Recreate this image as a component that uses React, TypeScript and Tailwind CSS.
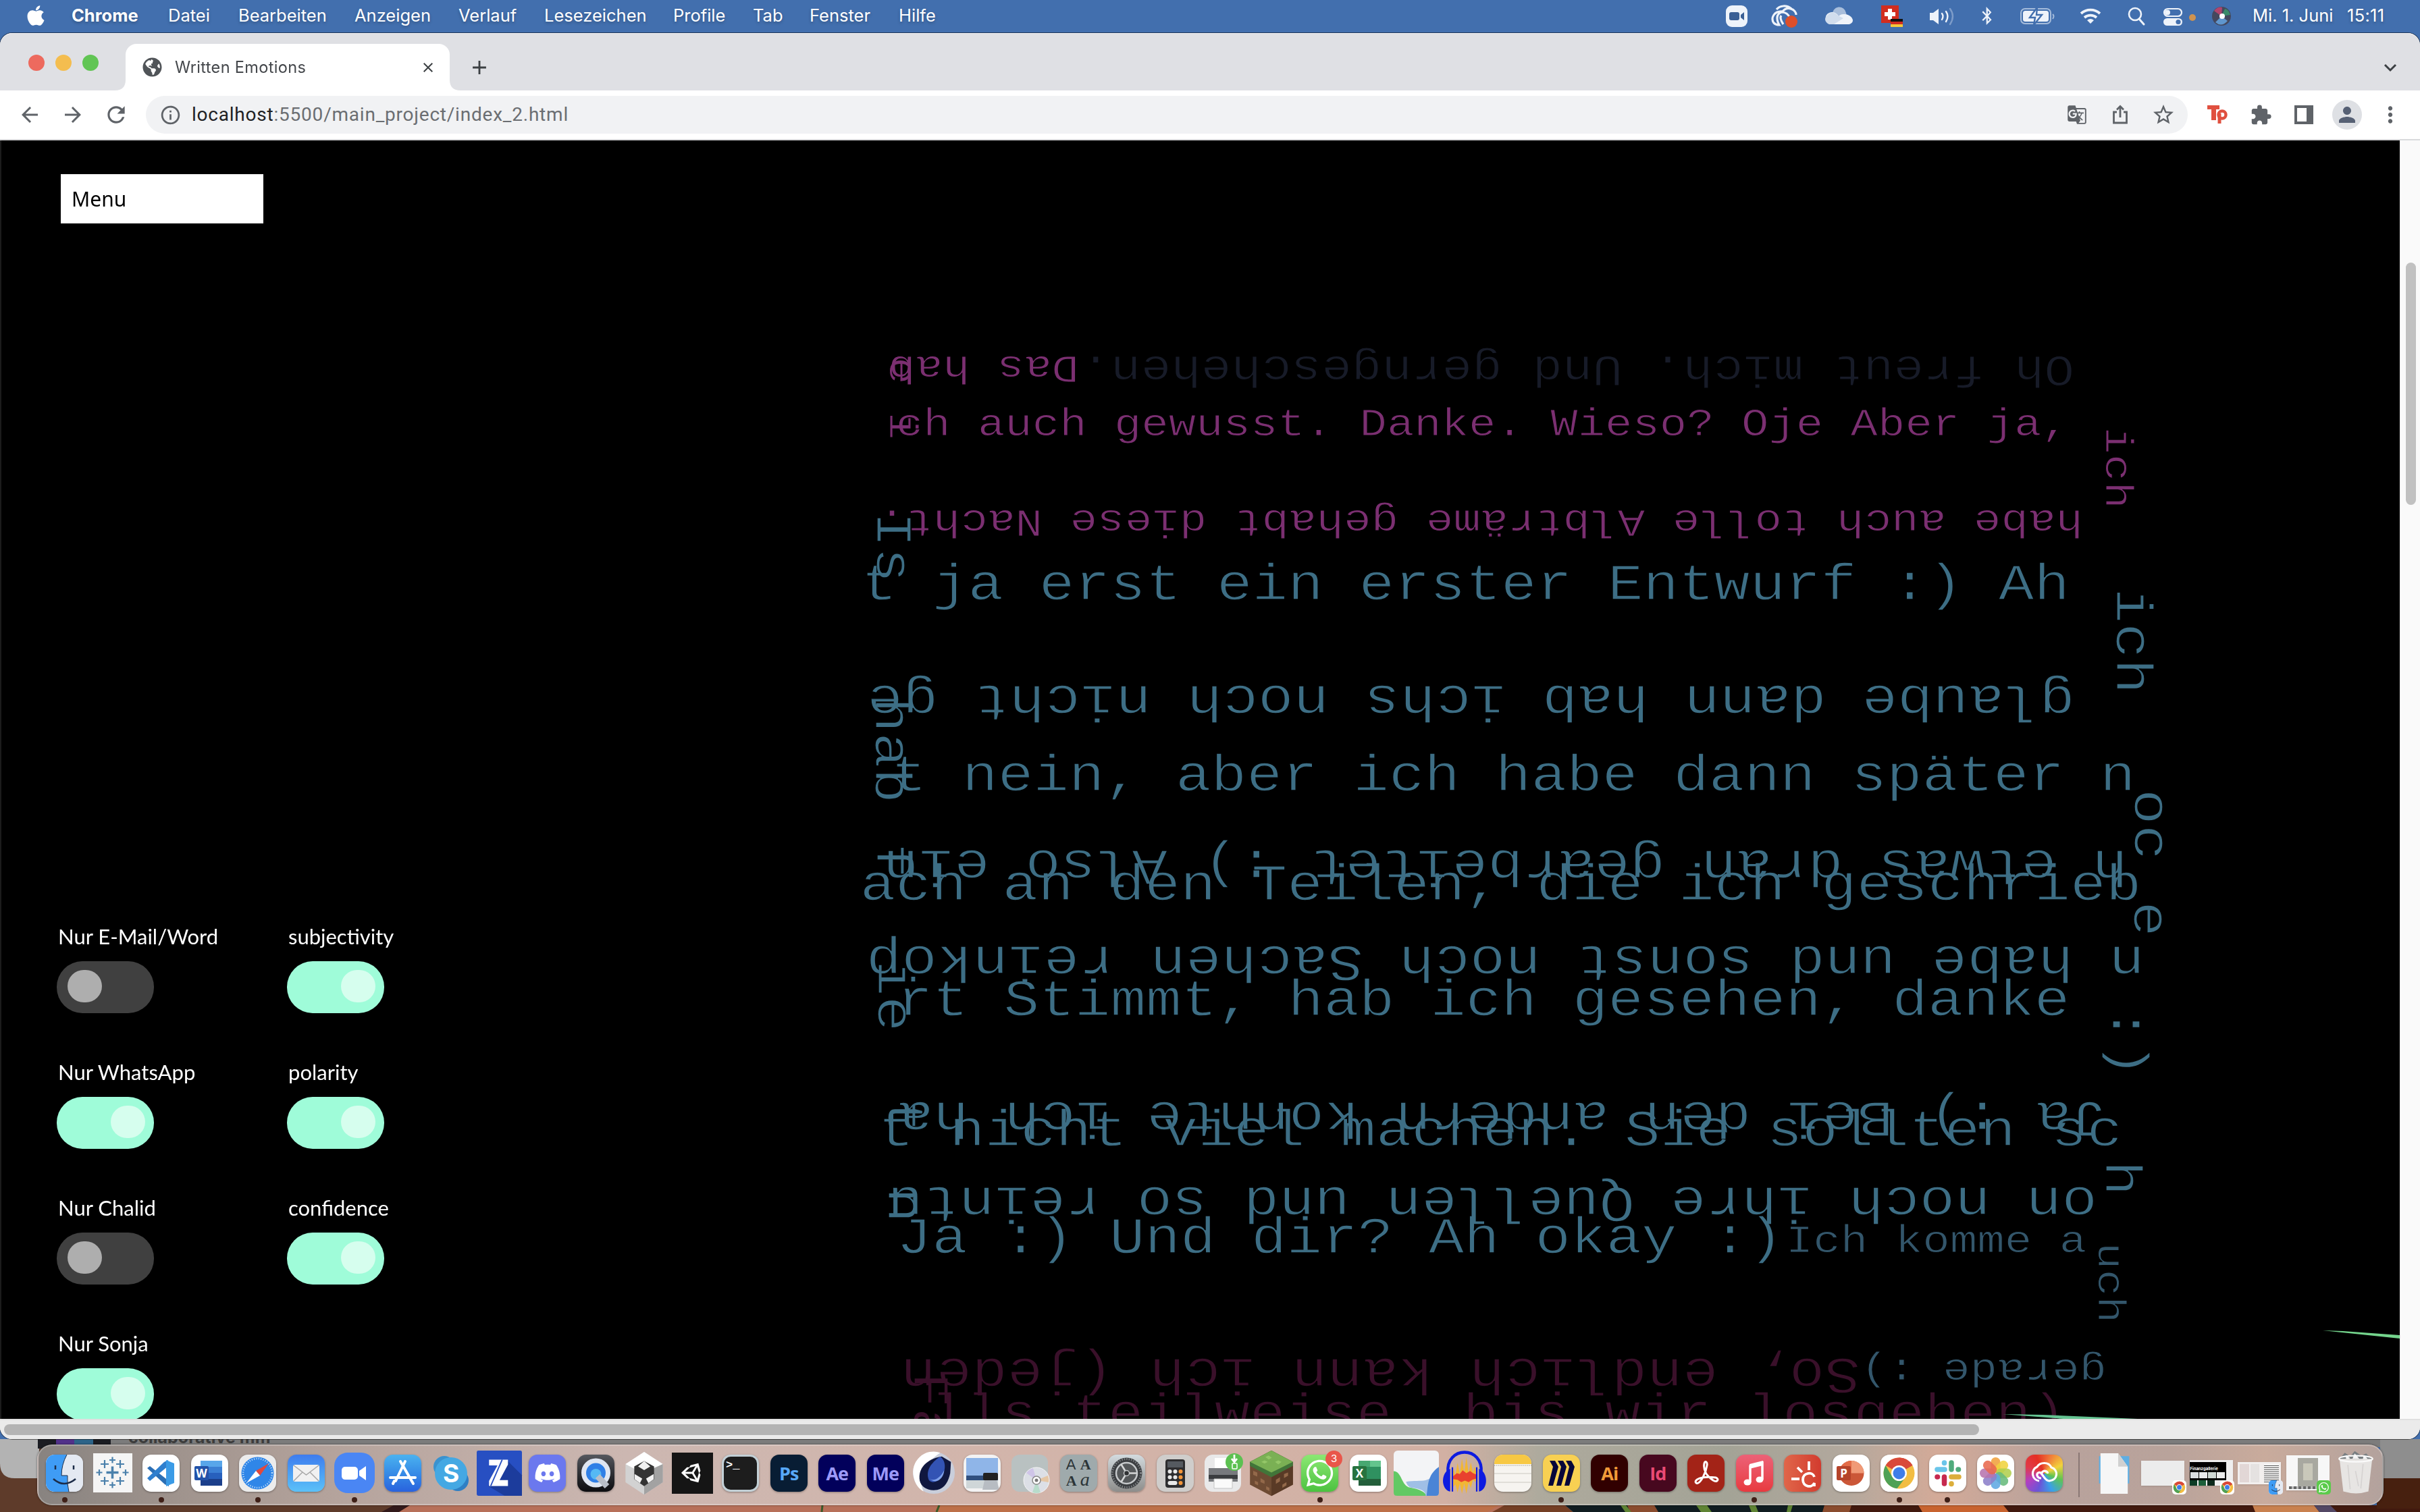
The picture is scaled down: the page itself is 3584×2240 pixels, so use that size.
import React from "react";
import { FaApple, FaBluetoothB, FaDiscord, FaGlobeAmericas, FaUnity, FaWhatsapp } from "react-icons/fa";
import {
  MdAdd,
  MdArrowBack,
  MdArrowForward,
  MdClose,
  MdExtension,
  MdGTranslate,
  MdInfoOutline,
  MdMoreVert,
  MdPerson,
  MdRefresh,
  MdStarBorder,
} from "react-icons/md";

/* ---------- poem canvas ---------- */

const PURPLE = "#7b2f71";
const TEAL = "#3d6e85";
const SLATE = "#33566b";
const MAROON = "#3a102a";
const NIGHT = "#171b28";

type Dir = "right" | "flip" | "down";
// text, reading direction, centre of the first letter, baseline, advance, colour
type Line = [string, Dir, number, number, number, string];

const LINES: Line[] = [
  ["Oh freut mich. Und gerngeschehen.", "flip", 3050, 528, 44.6, NIGHT],
  ["Das hab", "flip", 1578, 528, 40.4, PURPLE],
  ["e i", "down", 550, 1318, 40.8, PURPLE],
  ["ch auch gewusst. Danke. Wieso? Oje Aber ja,", "right", 1347, 646, 40.4, PURPLE],
  ["ich", "down", 653, 3118, 40.4, PURPLE],
  ["habe auch tolle Albträme gehabt diese Nacht.", "flip", 3065, 755, 40.56, PURPLE],
  ["Is", "down", 784, 1299, 52.6, TEAL],
  ["t ja erst ein erster Entwurf :) Ah", "right", 1302, 888, 52.64, TEAL],
  ["ich", "down", 897, 3135, 52.4, TEAL],
  ["glaube dann hab ichs noch nicht ge", "flip", 3047, 1016, 52.62, TEAL],
  ["hab", "down", 1059, 1297, 52.4, TEAL],
  ["t nein, aber ich habe dann später n", "right", 1346, 1171, 52.66, TEAL],
  ["oc", "down", 1195, 3161, 53, TEAL],
  ["h etwas dran gearbeitet :) Also ein", "flip", 3125, 1259, 52.68, TEAL],
  ["f", "down", 1275, 1299, 52.6, TEAL],
  ["ach an den Teilen, die ich geschrieb", "right", 1300, 1333, 52.72, TEAL],
  ["e", "down", 1361, 3161, 52.6, TEAL],
  ["n habe und sonst noch Sachen reinkop", "flip", 3150, 1402, 52.6, TEAL],
  ["ie", "down", 1449, 1300, 53, TEAL],
  ["rt Stimmt, hab ich gesehen, danke", "right", 1355, 1504, 52.64, TEAL],
  [":)", "down", 1517, 3129, 52.6, TEAL],
  ["Ja :) Bei den andern konnte ich ha", "flip", 3094, 1632, 52.68, TEAL],
  ["t", "down", 1653, 1316, 52.6, TEAL],
  ["t nicht viel machen. Sie sollten sc", "right", 1327, 1697, 52.65, TEAL],
  ["h", "down", 1745, 3119, 52.6, TEAL],
  ["on noch ihre Quellen und so reintu", "flip", 3080, 1758, 52.7, TEAL],
  ["n", "down", 1785, 1316, 52.6, TEAL],
  ["Ja :) Und dir? Ah okay :)", "right", 1354, 1856, 52.55, TEAL],
  ["Ich komme a", "right", 2665, 1856, 40.5, SLATE],
  ["uch", "down", 1861, 3107, 39.8, SLATE],
  ["gerade :)", "flip", 3100, 2014, 40.5, SLATE],
  ["So, endlich kann ich (jeden", "flip", 2729, 2013, 52.65, MAROON],
  ["Fa", "down", 2059, 1354, 52.6, MAROON],
  ["lls teilweise, bis wir losgehen)", "right", 1404, 2117, 52.6, MAROON],
];

const CANVAS_TOP = 208;

function PoemLine({ line }: { line: Line }) {
  const [text, dir, start, base, adv, color] = line;
  const size = adv / 0.6001;
  const half = adv / 2;
  const x = dir === "down" ? base : dir === "flip" ? start + half : start - half;
  const y = (dir === "down" ? start - half : base) - CANVAS_TOP;
  const angle = dir === "down" ? 90 : dir === "flip" ? 180 : 0;
  return (
    <span
      className="absolute block whitespace-pre leading-none [-webkit-text-stroke:0.018em_black] font-['Liberation_Mono',monospace]"
      style={{
        left: x,
        top: y - size * 0.7666,
        fontSize: size,
        color,
        transform: `rotate(${angle}deg) scaleY(0.86)`,
        transformOrigin: "0 0.7666em",
      }}
    >
      {text}
    </span>
  );
}

/* ---------- toggles ---------- */

function Toggle({ label, on }: { label: string; on: boolean }) {
  return (
    <div className="h-[201px] w-[341px]">
      <div className="h-[57px] pl-[2px] text-[31px] leading-[40px] text-white font-['Lato',sans-serif]">
        {label}
      </div>
      <div
        className={
          on
            ? "flex h-[77px] w-[144px] justify-end rounded-[38px] bg-[#9ffcd9] pt-[13px] pr-[13px]"
            : "flex h-[77px] w-[144px] rounded-[38px] bg-[#404040] pt-[13px] pl-[16px]"
        }
      >
        <div className={on ? "h-[48px] w-[51px] rounded-full bg-[#d6feee]" : "h-[48px] w-[51px] rounded-full bg-[#aeaeae]"} />
      </div>
    </div>
  );
}

/* ---------- menu bar ---------- */

function MenuBar() {
  return (
    <div className="flex h-[49px] items-center bg-[#426fae] text-[25.5px] leading-none text-white font-['Inter',sans-serif] [text-shadow:0_2px_4px_rgba(0,0,0,0.25)]">
      <div className="w-[106px] pb-[3px] pl-[36px]">
        <FaApple className="size-[34px]" />
      </div>
      <div className="flex pb-[3px]">
        <div className="w-[143px] font-bold">Chrome</div>
        <div className="w-[104px]">Datei</div>
        <div className="w-[172px]">Bearbeiten</div>
        <div className="w-[154px]">Anzeigen</div>
        <div className="w-[127px]">Verlauf</div>
        <div className="w-[191px]">Lesezeichen</div>
        <div className="w-[118px]">Profile</div>
        <div className="w-[84px]">Tab</div>
        <div className="w-[132px]">Fenster</div>
        <div>Hilfe</div>
      </div>
      <svg className="ml-auto h-[49px] w-[780px]" viewBox="2540 0 780 49" fill="none">
        <rect x="2556" y="8" width="32" height="32" rx="9" fill="#eef3fa" />
        <rect x="2561" y="18" width="15" height="12" rx="3" fill="#3a5f95" />
        <path d="M2578 22l5-4v12l-5-4z" fill="#3a5f95" />
        <g stroke="#eef3fa" strokeWidth="3.2">
          <path d="M2660 22c0-8-13-14-20-5-13-1-18 10-13 17 2 2 4 3 8 3-5-9-4-17 4-19 7 0 10 4 12 9" />
          <path d="M2631 14c5-6 15-7 22-1M2638 23c-3 4 1 10 3 13" />
        </g>
        <circle cx="2653" cy="32" r="9" fill="#dd4f2a" />
        <path d="M2714 22a10 10 0 0 1 20-3l1 5-14 8z" fill="#a9bedb" />
        <path d="M2711 36a9 9 0 0 1-2-17c6-3 12 1 14 5 2-2 4-3 7-3 8-1 14 5 14 9 0 4-4 6-7 6z" fill="#f0f4fa" />
        <path d="M2707 22c4-5 11-4 15 1l8 4-14 9h-7c-7-3-8-10-2-14z" fill="#d1dded" />
        <rect x="2786" y="8" width="26" height="26" fill="#d12d1f" />
        <path d="M2799 13v16M2791 21h16" stroke="#fff" strokeWidth="6" />
        <path fill="#111" d="M2800 28h18v4h-18z" />
        <path fill="#d12d1f" d="M2800 32h18v4h-18z" />
        <path fill="#f3c93c" d="M2800 36h18v4h-18z" />
        <path d="M2858 19h5l8-6v23l-8-6h-5z" fill="#eef3fa" />
        <path d="M2876 20q3 4 0 9M2882 17q5 7 0 15" stroke="#eef3fa" strokeWidth="2.4" strokeLinecap="round" />
        <path d="M2888 13q8 11 0 23" stroke="#7d9cc9" strokeWidth="2.4" strokeLinecap="round" />
        <rect x="2993" y="13" width="44" height="22" rx="6" stroke="#a5bcdb" strokeWidth="2" />
        <rect x="2996" y="16" width="38" height="16" rx="3.5" fill="#eef3fa" />
        <path d="M3040 21q3 3 0 7" stroke="#a5bcdb" strokeWidth="2" />
        <path d="M3017 11l-11 15h8l-2 11 12-15h-8z" fill="#eef3fa" stroke="#426fae" strokeWidth="2.4" />
        <path d="M3082 20a21 21 0 0 1 28 0M3087 26a14 14 0 0 1 18 0" stroke="#eef3fa" strokeWidth="3.8" />
        <path d="M3091 30q5-4 10 0l-5 5z" fill="#eef3fa" />
        <circle cx="3162" cy="21" r="9" stroke="#eef3fa" strokeWidth="2.6" />
        <path d="M3168 28l7 8" stroke="#eef3fa" strokeWidth="3" strokeLinecap="round" />
        <rect x="3205" y="13" width="26" height="11" rx="5.5" stroke="#eef3fa" strokeWidth="2.2" />
        <circle cx="3210" cy="18.500" r="4" fill="#eef3fa" />
        <rect x="3204" y="27" width="28" height="11" rx="5.500" fill="#eef3fa" />
        <circle cx="3226" cy="32.500" r="3.600" fill="#426fae" />
        <circle cx="3247" cy="26" r="5" fill="#cf934f" />
        <circle cx="3290" cy="24" r="14" fill="#44485e" />
        <path d="M3279 16q6-7 12-5l-1 13z" fill="#b0456e" />
        <path d="M3303 22q-2-8-8-9l-5 11z" fill="#3a8a6a" />
        <path d="M3281 33q9 8 18-2l-9-7z" fill="#5f96ce" />
        <circle cx="3291" cy="24" r="4" fill="#fff" />
      </svg>
      <FaBluetoothB className="absolute top-[10px] left-[2929px] size-[27px] text-[#eef3fa]" />
      <div className="flex w-[264px] pb-[3px] pl-[16px] whitespace-pre">
        <span className="w-[140px]">Mi. 1. Juni</span>
        <span className="tracking-[0.3px]">15:11</span>
      </div>
    </div>
  );
}

/* ---------- browser chrome ---------- */

function TabStrip() {
  return (
    <div className="flex h-[85px] rounded-t-[18px] border-t border-[#f3f3f5] bg-[#dfe0e4] pt-[15px]">
      <div className="flex w-[186px] gap-[16px] pt-[16px] pl-[42px]">
        <div className="size-[24px] rounded-full bg-[#ed6a5e]" />
        <div className="size-[24px] rounded-full bg-[#f4bd4f]" />
        <div className="size-[24px] rounded-full bg-[#61c554]" />
      </div>
      <div className="relative flex h-[69px] w-[480px] items-center rounded-t-[16px] bg-white pl-[25px]">
        <svg className="absolute bottom-0 -left-[16px] size-[16px]" viewBox="0 0 16 16">
          <path d="M16 0v16H0Q16 16 16 0z" fill="#fff" />
        </svg>
        <svg className="absolute -right-[16px] bottom-0 size-[16px]" viewBox="0 0 16 16">
          <path d="M0 0v16h16Q0 16 0 0z" fill="#fff" />
        </svg>
        <FaGlobeAmericas className="size-[29px] text-[#505458]" />
        <span className="ml-[19px] w-[362px] text-[24px] leading-none tracking-[0.35px] text-[#45484c] font-['Inter',sans-serif]">
          <span className="inline-block origin-left scale-x-[0.98]">Written Emotions</span>
        </span>
        <MdClose className="ml-[1px] size-[24px] text-[#3c4043]" />
      </div>
      <MdAdd className="mt-[18px] ml-[27px] size-[34px] text-[#3c4043]" />
      <svg className="mt-[25px] mr-[34px] ml-auto size-[20px]" viewBox="0 0 20 20" fill="none">
        <path d="M2 6l8 8 8-8" stroke="#3c4043" strokeWidth="3" />
      </svg>
    </div>
  );
}

function Toolbar() {
  return (
    <div className="flex h-[74px] items-center border-b-2 border-[#d9dadc] bg-white text-[#5f6368]">
      <MdArrowBack className="ml-[26px] size-[36px]" />
      <MdArrowForward className="ml-[28px] size-[36px]" />
      <MdRefresh className="ml-[27px] size-[38px]" />
      <div className="ml-[25px] flex h-[56px] w-[3024px] items-center rounded-full bg-[#f1f2f4]">
        <MdInfoOutline className="ml-[20px] size-[33px]" />
        <span className="ml-[15px] text-[28px] leading-none tracking-[0.78px] text-[#6b6e72] font-['Roboto',sans-serif]">
          <span className="text-[#202124]">localhost</span>:5500/main_project/index_2.html
        </span>
        <MdGTranslate className="ml-auto size-[30px]" />
        <svg className="ml-[34px] size-[30px]" viewBox="0 0 30 30" fill="none" stroke="#5f6368" strokeWidth="2.800">
          <path d="M10 11H5.500v16h19V11H20M15 19V3M10 7.500l5-5 5 5" />
        </svg>
        <MdStarBorder className="mr-[18px] ml-[31px] size-[36px]" />
      </div>
      <svg className="ml-[28px] size-[32px]" viewBox="0 0 32 32">
        <path d="M1 2h18v6h-5v16H7V8H1z" fill="#e0503f" />
        <path d="M19 29V14" stroke="#e0503f" strokeWidth="5" />
        <circle cx="23" cy="16" r="5.500" fill="none" stroke="#e0503f" strokeWidth="4.500" />
      </svg>
      <MdExtension className="ml-[32px] size-[33px]" />
      <svg className="ml-[33px] size-[28px]" viewBox="0 0 28 28">
        <path d="M0 0h28v28H0zM4 4v20h14V4z" fill="#5f6368" fillRule="evenodd" />
      </svg>
      <div className="ml-[28px] flex size-[44px] items-center justify-center rounded-full bg-[#dee0e4]">
        <MdPerson className="size-[36px] text-[#566074]" />
      </div>
      <MdMoreVert className="ml-[23px] size-[38px]" />
    </div>
  );
}

/* ---------- dock icons ---------- */

function Tile({ className, children }: { className: string; children?: React.ReactNode }) {
  return (
    <div className={"flex size-[55px] items-center justify-center overflow-hidden rounded-[13px] leading-none shadow-[0_1px_3px_rgba(0,0,0,0.35)] " + className}>
      {children}
    </div>
  );
}

function Pic({ children, w = 55, h = 55 }: { children: React.ReactNode; w?: number; h?: number }) {
  return (
    <svg width={w} height={h} viewBox="0 0 55 55" className="max-w-none shrink-0 overflow-visible" fill="none">
      {children}
    </svg>
  );
}

function ChromeMark() {
  return (
    <>
      <circle cx="27.500" cy="27.500" r="23" fill="#f2bd42" />
      <path d="M27.500 27.500L7.600 16A23 23 0 0 1 47.400 16z" fill="#d9493a" />
      <path d="M27.500 4.500A23 23 0 0 1 47.400 16H27.500z" fill="#d9493a" />
      <path d="M7.600 16a23 23 0 0 0 17 34.300L37.500 33l-20 0z" fill="#4fa155" />
      <circle cx="27.500" cy="27.500" r="11.500" fill="#fff" />
      <circle cx="27.500" cy="27.500" r="9" fill="#3f7de8" />
    </>
  );
}

function FinderMark() {
  return (
    <>
      <path d="M0 0h55v55H0z" fill="#e4e9f2" />
      <path d="M0 0h31q-8 15-8 31h9q-1 12 2 24H0z" fill="#3f9cf5" />
      <path d="M14 16v6M41 16v6" stroke="#1c2c48" strokeWidth="2.500" />
      <path d="M11 36q16 14 33 0" stroke="#1c2c48" strokeWidth="2.500" />
      <path d="M31 0q-8 15-8 31h9q-1 12 2 24" stroke="#1c2c48" strokeWidth="1" />
    </>
  );
}

const TABLEAU_MARKS: [number, number, number][] = [
  [27.5, 27.5, 9],
  [16, 15, 6],
  [39, 15, 6],
  [16, 40, 6],
  [39, 40, 6],
  [27.5, 9, 4.5],
  [27.5, 46, 4.5],
  [8, 27.5, 4.5],
  [47, 27.5, 4.5],
];

const PETALS: [number, string][] = [
  [0, "#f0a03c"],
  [45, "#f0d33e"],
  [90, "#b2cf4e"],
  [135, "#68bb7c"],
  [180, "#5fa9e2"],
  [225, "#8c7fc9"],
  [270, "#b774ae"],
  [315, "#e8694e"],
];

type App = { dot?: boolean; icon: React.ReactNode };

const adobe = "text-[27px] font-bold font-['Open_Sans',sans-serif] tracking-[-1px]";

const APPS: App[] = [
  { dot: true, icon: <Tile className="bg-[#e4e9f2]"><Pic><FinderMark /></Pic></Tile> },
  {
    icon: (
      <div className="size-[58px] bg-[#f5f5f5] p-[1px]">
        <Pic>
          {TABLEAU_MARKS.map(([x, y, r], i) => (
            <path key={i} d={`M${x - r} ${y}h${2 * r}M${x} ${y - r}v${2 * r}`} stroke="#4a80ab" strokeWidth={r > 8 ? 3.5 : 2.2} />
          ))}
        </Pic>
      </div>
    ),
  },
  {
    dot: true,
    icon: (
      <Tile className="bg-white">
        <Pic>
          <path d="M7 20l4-3 28 22v8L33 44z" fill="#2b6fb5" />
          <path d="M7 35l4 4 27-22V8l-6 3z" fill="#2f7fce" />
          <path d="M35 8l12 5v29l-12 5z" fill="#3b9be6" />
        </Pic>
      </Tile>
    ),
  },
  {
    icon: (
      <Tile className="bg-white">
        <Pic>
          <path d="M14 9h32v9H14z" fill="#58a6ea" />
          <path d="M14 18h32v9H14z" fill="#3b7fd4" />
          <path d="M14 27h32v9H14z" fill="#2760bd" />
          <path d="M14 36h32v10H14z" fill="#1b3f8b" />
          <rect x="5" y="17" width="21" height="21" rx="2" fill="#2252a8" />
          <text x="15.500" y="33.500" textAnchor="middle" fontSize="17" fontWeight="700" fill="#fff" fontFamily="Open Sans, sans-serif">W</text>
        </Pic>
      </Tile>
    ),
  },
  {
    dot: true,
    icon: (
      <Tile className="bg-[#ececec]">
        <Pic>
          <circle cx="27.500" cy="27.500" r="24" fill="#2f86e8" />
          <circle cx="27.500" cy="27.500" r="21.500" stroke="#d4e8fb" strokeWidth="2.500" strokeDasharray="1 2.400" />
          <path d="M44 13L25 24l6 7z" fill="#e2483c" />
          <path d="M11 42l14-18 6 7z" fill="#fff" />
        </Pic>
      </Tile>
    ),
  },
  {
    icon: (
      <Tile className="bg-gradient-to-b from-[#3f7cee] to-[#5cc1f8]">
        <Pic>
          <rect x="8" y="15" width="39" height="25" rx="3" fill="#f1f1f1" />
          <path d="M9 16l18.500 14L46 16M9 39l13-13M46 39L33 26" stroke="#a8a8a8" strokeWidth="1.500" />
        </Pic>
      </Tile>
    ),
  },
  {
    dot: true,
    icon: (
      <div className="flex size-[60px] items-center justify-center rounded-[20px] bg-[#4a86f4]">
        <Pic>
          <rect x="9" y="18" width="24" height="19" rx="5" fill="#fff" />
          <path d="M35 24l10-7v21l-10-7z" fill="#fff" />
        </Pic>
      </div>
    ),
  },
  {
    icon: (
      <Tile className="bg-gradient-to-b from-[#4bb2ef] to-[#2a62dd]">
        <Pic>
          <path d="M31 10L17 39M24 10l19 33M9 34h37M15 39l-2 4" stroke="#fff" strokeWidth="4" strokeLinecap="round" />
        </Pic>
      </Tile>
    ),
  },
  {
    icon: (
      <Pic>
        <circle cx="18" cy="18" r="16" fill="#3a92cf" />
        <circle cx="38" cy="38" r="16" fill="#2f7fc4" />
        <circle cx="28" cy="28" r="24" fill="#44a8e3" />
        <text x="28" y="41" textAnchor="middle" fontSize="37" fontWeight="700" fill="#fff" fontFamily="Inter, sans-serif">S</text>
      </Pic>
    ),
  },
  {
    icon: (
      <Pic w={67} h={67}>
        <rect width="55" height="55" rx="2" fill="#274fc2" />
        <path d="M37 12l18 18v25H34L14 43z" fill="#1c3c9c" />
        <path d="M15 11h23v6L24 43h-9v-6l14-26zM15 11h14v7H15zM24 36h14v7H24z" fill="#fff" />
        <path d="M31 11L17 43" stroke="#274fc2" strokeWidth="1.500" />
      </Pic>
    ),
  },
  { icon: <Tile className="bg-[#6b78ee]"><FaDiscord className="size-[40px] text-white" /></Tile> },
  {
    icon: (
      <Tile className="bg-gradient-to-b from-[#55585e] to-[#0d0d10]">
        <Pic>
          <circle cx="27.500" cy="27" r="18" fill="#2f7fe6" stroke="#dfe6f2" strokeWidth="7" />
          <circle cx="27.500" cy="29" r="8" fill="#55b9f4" />
          <path d="M30 32l14 15" stroke="#b9bec8" strokeWidth="9" />
        </Pic>
      </Tile>
    ),
  },
  {
    icon: (
      <Pic w={62} h={62}>
        <path d="M27.500 0L52 16v24L27.500 56 3 40V16z" fill="#d2d2d2" />
        <path d="M27.500 0L52 16 27.500 29 3 16z" fill="#fff" />
        <path d="M27.500 27L52 16v24L27.500 56z" fill="#a2a2a2" />
        <path d="M27.500 12l13 7v17l-13 9-13-9V19z" fill="#343434" />
        <path d="M27.500 12l8 7-8 5-8-5zM15 29l10 6-3 6-7-5zM40 29l-10 6 3 6 7-5z" fill="#f1f1f1" />
      </Pic>
    ),
  },
  { icon: <div className="flex size-[61px] items-center justify-center bg-[#151515]"><FaUnity className="size-[34px] text-white" /></div> },
  {
    icon: (
      <Tile className="border-[3px] border-[#c3d0d6] bg-[#1d1d1d]">
        <Pic>
          <text x="6" y="20" fontSize="17" fontWeight="700" fill="#fff" fontFamily="Liberation Mono, monospace">&gt;_</text>
        </Pic>
      </Tile>
    ),
  },
  { icon: <Tile className={"bg-[#081d34] text-[#57a8f8] " + adobe}>Ps</Tile> },
  { icon: <Tile className={"bg-[#02005b] text-[#9c9af8] " + adobe}>Ae</Tile> },
  { icon: <Tile className={"bg-[#02005b] text-[#9c9af8] " + adobe}>Me</Tile> },
  {
    icon: (
      <Pic w={62} h={62}>
        <circle cx="27.500" cy="27.500" r="27.500" fill="#c9cedb" />
        <path d="M36 1A27 27 0 0 0 1 33c2 9 6 15 13 19C6 35 14 15 36 1z" fill="#fff" />
        <path d="M38 6C18 9 6 22 9 38c2 9 12 14 23 12 10-2 15-12 17-22l1-15z" fill="#10173f" />
        <path d="M36 6c-12 8-20 19-15 31 6 7 17-1 20-11 2-8 1-15-5-20z" fill="#3353b4" />
        <path d="M22 35c6 5 15-2 19-11 0 10-10 20-19 11z" fill="#7fa0ea" />
      </Pic>
    ),
  },
  {
    icon: (
      <Tile className="bg-[#f3f3f3]">
        <Pic>
          <path d="M4 5h47v30H4z" fill="#8fb5e8" />
          <path d="M4 31h47v7H4z" fill="#31507f" />
          <path d="M4 38h47v12H4z" fill="#cfd6d8" />
          <path d="M31 28h18v10l4 14H28l3-14z" fill="#b7bcc2" />
          <rect x="29" y="27" width="22" height="11" rx="2" fill="#222" />
        </Pic>
      </Tile>
    ),
  },
  {
    icon: (
      <Pic>
        <rect width="54" height="55" rx="12" fill="#b9c1c1" />
        <circle cx="37" cy="38" r="19" fill="#dcdfe6" stroke="#f7f7f7" />
        <path d="M37 38L22 27a19 19 0 0 1 10-7z" fill="#cfc5e8" />
        <path d="M37 38l17-7a19 19 0 0 1 1 10z" fill="#e5c6a5" />
        <path d="M37 38l6 18a19 19 0 0 1-12 0z" fill="#b8dccb" />
        <circle cx="37" cy="38" r="6" fill="#fff" stroke="#888" strokeWidth="1.500" />
        <circle cx="37" cy="38" r="2.500" fill="#777" />
      </Pic>
    ),
  },
  {
    icon: (
      <Tile className="bg-[#9faaac]">
        <div className="grid grid-cols-2 gap-x-[5px] gap-y-[2px] text-[22px] text-[#2c3538]">
          <span className="font-['Liberation_Sans',sans-serif]">A</span>
          <span className="font-bold font-['Liberation_Serif',serif]">A</span>
          <span className="font-bold font-['Liberation_Serif',serif]">A</span>
          <span className="text-[28px] leading-[18px] italic font-['Liberation_Serif',serif]">a</span>
        </div>
      </Tile>
    ),
  },
  {
    icon: (
      <Tile className="bg-gradient-to-b from-[#d3dbdf] to-[#8d8d8b]">
        <Pic>
          <circle cx="27.500" cy="27.500" r="23" fill="#3b3e41" />
          <circle cx="27.500" cy="27.500" r="21" stroke="#7c7f82" strokeWidth="3" strokeDasharray="1.500 2" />
          <circle cx="27.500" cy="27.500" r="15.500" fill="#55585a" stroke="#c5c8ca" strokeWidth="2.500" />
          <path d="M27.500 27.500h15M27.500 27.500l-8-13M27.500 27.500l-8 13" stroke="#d5d7d8" strokeWidth="2.500" />
          <circle cx="27.500" cy="27.500" r="4" fill="#2f3133" stroke="#c5c8ca" strokeWidth="1.500" />
        </Pic>
      </Tile>
    ),
  },
  {
    icon: (
      <Tile className="bg-[#cfcdcb]">
        <Pic>
          <rect x="13" y="7" width="29" height="42" rx="4" fill="#2d2d2f" />
          <rect x="16" y="10" width="23" height="9" fill="#555a60" />
          {[25, 33.5].map((y) => (
            <g key={y}>
              <circle cx="19.500" cy={y} r="3" fill="#e8e8e8" />
              <circle cx="27.500" cy={y} r="3" fill="#e8e8e8" />
              <circle cx="35.500" cy={y} r="3" fill="#f2953a" />
            </g>
          ))}
          <rect x="16.500" y="39" width="14" height="6" rx="3" fill="#e8e8e8" />
          <circle cx="35.500" cy="42" r="3" fill="#f2953a" />
        </Pic>
      </Tile>
    ),
  },
  {
    icon: (
      <Pic>
        <rect width="54" height="55" rx="12" fill="#e9e9ea" />
        <path d="M15 5h25v16H15z" fill="#fff" />
        <path d="M6 20h43v20H6z" fill="#77797d" />
        <path d="M6 30h43v6H6z" fill="#3a3c3f" />
        <path d="M14 36h27v14H14z" fill="#fafafa" stroke="#c4c4c4" />
        <circle cx="44" cy="11" r="13" fill="#5cc151" />
        <path d="M44 0v9M40 6l4 5 4-5" stroke="#fff" strokeWidth="2.800" />
        <rect x="41" y="13" width="7" height="8" rx="1" stroke="#fff" strokeWidth="1.500" />
      </Pic>
    ),
  },
  {
    icon: (
      <Pic w={66} h={66}>
        <path d="M27.500 0L54 14v28L27.500 56 1 42V14z" fill="#6e4b33" />
        <path d="M27.500 0L54 14v5L27.500 33 1 19v-5z" fill="#417539" />
        <path d="M27.500 0L54 14 27.500 27 1 14z" fill="#7ab054" />
        <path d="M27.500 33L54 19v23L27.500 56z" fill="#593a26" />
        <path d="M5 25l5 2v5l-5-2zM14 34l5 3v4l-5-2zM7 37l4 2v4l-4-2zM33 36l5-3v5l-5 3zM43 29l5-2v4l-5 3zM41 42l5-3v4l-5 3zM21 44l4 2v4l-4-2z" fill="#93694a" />
        <path d="M20 8l4-2 4 3-4 2zM32 14l4-2 4 2-4 3zM15 14l4-2 4 2-4 2z" fill="#94c768" />
      </Pic>
    ),
  },
  {
    dot: true,
    icon: (
      <div className="relative">
        <Tile className="bg-gradient-to-b from-[#8be873] to-[#4bc23f]"><FaWhatsapp className="size-[45px] text-white" /></Tile>
        <div className="absolute -top-[6px] left-[36px] flex size-[25px] items-center justify-center rounded-full bg-[#e9564a] text-[15px] text-white font-['Inter',sans-serif]">3</div>
      </div>
    ),
  },
  {
    icon: (
      <Tile className="bg-white">
        <Pic>
          <path d="M13 9h33v37H13z" fill="#2f9160" />
          <path d="M30 9h16v9H30z" fill="#63c48d" />
          <path d="M13 9h17v9H13z" fill="#47a871" />
          <path d="M13 36h33v10H13z" fill="#235f3b" />
          <rect x="4" y="17" width="21" height="21" rx="2" fill="#27733f" />
          <text x="14.500" y="33.500" textAnchor="middle" fontSize="17" fontWeight="700" fill="#fff" fontFamily="Open Sans, sans-serif">X</text>
        </Pic>
      </Tile>
    ),
  },
  {
    icon: (
      <Pic w={67} h={67}>
        <rect width="55" height="55" rx="5" fill="#f3f4f6" />
        <path d="M0 25c10 0 9 18 20 20s18 5 20 10H4q-4 0-4-4z" fill="#62c964" />
        <path d="M15 38c20-3 30 4 40-18v31q0 4-4 4H39c0-8-12-9-18-10q-4-1-6-7z" fill="#9fbfe6" />
        <path d="M40 55c2-10 0-25 15-35v31q0 4-4 4z" fill="#4a84d6" />
      </Pic>
    ),
  },
  {
    icon: (
      <Pic w={66} h={60}>
        <path d="M10 32l3-10 2 9 3-17 3 15 3-21 3 19 3-21 3 22 3-15 3 14 2-8 4 12-3 9-3-3-3 11-3-8-3 16-3-14-3 14-3-14-3 12-3-11-3 4z" fill="#f2b634" />
        <path d="M12 32l5-4 4 1 4-5 5 4 5-3 4 3 5 2v5l-6 2-5 3-5-2-5 2-5-3-6-1z" fill="#e9412e" />
        <path d="M5 28C1-10 54-10 50 28" stroke="#0d1be0" strokeWidth="4" />
        <path d="M8 22v31C-5 50-5 27 8 22zM47 22v31c13-3 13-26 0-31z" fill="#0d1be0" />
        <path d="M11 20v33M44 20v33" stroke="#0d1be0" strokeWidth="2" />
      </Pic>
    ),
  },
  {
    icon: (
      <Tile className="bg-[#f6f4f0]">
        <Pic>
          <path d="M0 0h55v14H0z" fill="#f7c843" />
          <path d="M0 16h55" stroke="#b8b4ab" strokeWidth="1.500" strokeDasharray="1.500 1.500" />
          <path d="M0 28h55M0 41h55" stroke="#d9d6cf" strokeWidth="1.500" />
        </Pic>
      </Tile>
    ),
  },
  {
    dot: true,
    icon: (
      <Tile className="bg-[#f8d052]">
        <Pic>
          <path d="M10 9h8l5 9-8 28H8l7-28zM22 9h8l5 9-8 28h-7l7-28zM34 9h8l5 9-8 28h-7l7-28z" fill="#07063a" />
        </Pic>
      </Tile>
    ),
  },
  { icon: <Tile className={"bg-[#310000] text-[#f19a38] " + adobe}>Ai</Tile> },
  { icon: <Tile className={"bg-[#47081f] text-[#ea4a74] " + adobe}>Id</Tile> },
  {
    icon: (
      <Tile className="bg-[#a32317]">
        <Pic>
          <path d="M13 42c-4-4 6-11 29-8 6 2 2 8-4 4-9-6-15-15-13-25 1-5 5-2 4 3-2 13-9 24-13 26q-2 1-3 0z" stroke="#fff" strokeWidth="3" />
        </Pic>
      </Tile>
    ),
  },
  {
    dot: true,
    icon: (
      <Tile className="bg-gradient-to-b from-[#ec6177] to-[#e8393f]">
        <Pic>
          <path d="M21 41V17l18-5v25" stroke="#fff" strokeWidth="3.500" />
          <path d="M20 14l20-5v7l-20 5z" fill="#fff" />
          <ellipse cx="17" cy="41" rx="5.500" ry="4.500" fill="#fff" />
          <ellipse cx="35" cy="37" rx="5.500" ry="4.500" fill="#fff" />
        </Pic>
      </Tile>
    ),
  },
  {
    icon: (
      <Tile className="bg-gradient-to-r from-[#e0664a] to-[#d23a2e]">
        <Pic>
          <path d="M45 33c-2-8-17-7-17 4s13 13 17 5v5M37 10v13M20 19l7 7M11 36h12" stroke="#fff" strokeWidth="3.800" />
        </Pic>
      </Tile>
    ),
  },
  {
    icon: (
      <Tile className="bg-white">
        <Pic>
          <circle cx="28" cy="27.500" r="18.500" fill="#cb5738" />
          <path d="M28 9a18.500 18.500 0 0 1 18.500 18.500H28z" fill="#f09a77" />
          <path d="M28 9v18.500H9.500A18.500 18.500 0 0 1 28 9z" fill="#e36c48" />
          <rect x="6" y="17" width="21" height="21" rx="2" fill="#b5432a" />
          <text x="16.500" y="33.500" textAnchor="middle" fontSize="17" fontWeight="700" fill="#fff" fontFamily="Open Sans, sans-serif">P</text>
        </Pic>
      </Tile>
    ),
  },
  { dot: true, icon: <Tile className="bg-white"><Pic><ChromeMark /></Pic></Tile> },
  {
    dot: true,
    icon: (
      <Tile className="bg-white">
        <Pic>
          <g strokeWidth="7.500" strokeLinecap="round">
            <path d="M12 22h11" stroke="#6ac5ea" />
            <path d="M22.500 12v.5" stroke="#6ac5ea" />
            <path d="M33 12v10" stroke="#50ab7c" />
            <path d="M43 22h.5" stroke="#50ab7c" />
            <path d="M33 33h11" stroke="#dcae3b" />
            <path d="M33 43v.5" stroke="#dcae3b" />
            <path d="M22.500 33v10" stroke="#c6294f" />
            <path d="M12 33h.5" stroke="#c6294f" />
          </g>
        </Pic>
      </Tile>
    ),
  },
  {
    icon: (
      <Tile className="bg-white">
        <Pic>
          {PETALS.map(([a, c]) => (
            <rect key={a} x="20.500" y="4" width="14" height="23" rx="7" fill={c} fillOpacity="0.88" transform={`rotate(${a} 27.5 27.5)`} />
          ))}
        </Pic>
      </Tile>
    ),
  },
  {
    icon: (
      <Tile className="bg-[conic-gradient(from_20deg,#f0793a,#f2d23c,#5fc552,#3aa0e8,#6a55d8,#b43fc0,#e03a4a,#e52f24,#f0793a)]">
        <Pic>
          <path d="M20 39a11 11 0 0 1-3-21c4-7 17-8 21 1 11 3 10 19-3 20-5 0-8-6-11-10-3-5-8-2-7 2 1 3 4 4 6 4M33 28c-2-5-7-5-9-1" stroke="#fff" strokeWidth="3.200" />
        </Pic>
      </Tile>
    ),
  },
];

function MiniBadge({ children }: { children: React.ReactNode }) {
  return (
    <div className="absolute right-[1px] bottom-0 size-[21px] overflow-hidden rounded-[5px] bg-white">
      <svg className="size-[21px]" viewBox="0 0 55 55" fill="none">
        {children}
      </svg>
    </div>
  );
}

function Dock() {
  return (
    <div className="absolute top-[2140px] left-[55px] flex h-[90px] w-[3475px] rounded-[22px] border-2 border-white/25 bg-[linear-gradient(90deg,#888380_0%,#9c918b_5%,#b3a29b_12%,#ccb7b1_25%,#d2b5ab_40%,#d2b0a3_60%,#aeaa9d_64%,#a3a396_72%,#b2a89d_77%,#d3aa98_81%,#b8a29c_86%,#b9a39b_91%,#c9ab9c_95%,#b3a29d_100%)] pl-[3px] shadow-[0_0_3px_rgba(0,0,0,0.5)]">
      {APPS.map((a, i) => (
        <div key={i} className="flex h-[90px] w-[71.5px] shrink-0 flex-col items-center">
          <div className="flex h-[80px] items-center justify-center">{a.icon}</div>
          {a.dot && <div className="-mt-[4px] size-[8px] rounded-full bg-[#3f2018]" />}
        </div>
      ))}
      <div className="mt-[10px] mr-[15.5px] ml-[15px] h-[66px] w-[2px] shrink-0 bg-[#8a7774]" />
      <div className="flex h-[82px] w-[71.5px] items-center justify-center">
        <Pic w={60} h={60}>
          <path d="M7 4h41v37H7z" fill="#5eaee3" />
          <path d="M9 0h24l13 18v37H9z" fill="#f6f6f6" />
          <path d="M33 0l13 18H33z" fill="#d0d0d0" />
        </Pic>
      </div>
      <div className="relative h-[72px] w-[71.5px]">
        <div className="mt-[22px] ml-[4px] h-[37px] w-[64px] bg-[#ececec] shadow-sm" />
        <MiniBadge><ChromeMark /></MiniBadge>
      </div>
      <div className="relative h-[72px] w-[71.5px]">
        <div className="mt-[21px] ml-[4px] h-[38px] w-[64px] overflow-hidden bg-[#efefef] pt-[3px] shadow-sm">
          <div className="h-[27px] w-[54px] bg-black pt-[7px] pl-[1px]">
            <div className="text-[6px] leading-none font-bold text-white font-['Inter',sans-serif]">Finanzgallerie</div>
            <div className="mt-[2px] flex gap-[1px]">
              <div className="h-[9px] w-[12px] bg-[#d9dde0]" />
              <div className="h-[9px] w-[12px] bg-[#e9eaec]" />
              <div className="h-[9px] w-[12px] bg-[#cfd8d4]" />
              <div className="h-[9px] w-[12px] bg-[#eceded]" />
            </div>
          </div>
          <div className="flex gap-[2px]">
            <div className="h-[8px] w-[11px] bg-[#0d3d26]" />
            <div className="h-[8px] w-[11px] bg-[#1d5f3a]" />
            <div className="h-[8px] w-[11px] bg-[#0c2a1c]" />
          </div>
        </div>
        <MiniBadge><ChromeMark /></MiniBadge>
      </div>
      <div className="relative h-[72px] w-[71.5px]">
        <div className="mt-[24px] ml-[4px] flex h-[33px] w-[64px] bg-[#f2efee] p-[3px] shadow-sm">
          <div className="w-[14px] bg-[#e2d7d6]" />
          <div className="ml-[2px] w-[14px] bg-[#e5e2e1]" />
          <div className="ml-[7px] w-[22px] bg-[repeating-linear-gradient(0deg,#555_0_1px,#f5f5f5_1px_3px)]" />
        </div>
        <MiniBadge><FinderMark /></MiniBadge>
      </div>
      <div className="relative h-[72px] w-[71.5px]">
        <div className="mt-[14px] ml-[4px] h-[52px] w-[64px] bg-[#f7f7f7] pt-[4px] shadow-sm">
          <div className="mx-auto h-[42px] w-[30px] bg-[#a8a8a0] px-[8px] pt-[8px]">
            <div className="h-[25px] bg-[#c9c8ba]" />
          </div>
          <div className="mx-[4px] h-[4px] bg-[repeating-linear-gradient(90deg,#666_0_4px,#bbb_4px_7px)]" />
        </div>
        <div className="absolute right-[1px] bottom-0 flex size-[21px] items-center justify-center rounded-[5px] bg-[#5bcb4b]">
          <FaWhatsapp className="size-[17px] text-white" />
        </div>
      </div>
      <div className="flex h-[80px] w-[71.5px] items-center justify-center">
        <Pic w={62} h={62}>
          <path d="M6 9l7-8 7 5 6-7 9 6 6-3 8 8z" fill="#777d80" />
          <path d="M14 4l6 4-5 4zM26 2l6 7h-9zM38 4l5 5-7 3z" fill="#f4f4f4" />
          <path d="M6 9h43l-5 43q-16 5-33 0z" fill="#e7e5e3" />
          <ellipse cx="27.500" cy="9" rx="22" ry="4" stroke="#fafafa" strokeWidth="2" />
          <path d="M17 17l3 32M37 16l-3 32M27 25l4 20" stroke="#d6d3d2" strokeWidth="1.500" />
        </Pic>
      </div>
    </div>
  );
}

function Wallpaper() {
  return (
    <svg className="absolute top-[2132px] left-0 h-[108px] w-[3584px]" viewBox="0 2132 3584 108">
      <path fill="#5e3b2a" d="M0 2132h610v108H0z" />
      <path fill="#b77059" d="M610 2132h1700v108H590z" />
      <path fill="#32191a" d="M583 2230h24l-16 10h-26z" />
      <path fill="#bd7048" d="M1388 2230h832l-18 10H1386z" />
      <path d="M1218 2230l-1 10M1391 2230l-4 10" stroke="#3b5a2a" strokeWidth="3" />
      <path fill="#743f24" d="M2228 2230h90l12 10h-120z" />
      <path fill="#101c20" d="M2318 2230h420v10h-408z" />
      <path fill="#8a4c2e" d="M2410 2230h40l6 10h-42zM2702 2230h42v10h-45z" />
      <path fill="#5f8434" d="M2400 2230h8l8 10h-9zM2512 2230h16l7 10h-16zM2590 2230h10l4 10h-10zM2648 2230h7l-3 10h-6z" />
      <path fill="#41190e" d="M2742 2230h842v10h-845z" />
      <path fill="#c8632f" d="M2841 2230h126l8 10h-128z" />
      <path fill="#c9814f" d="M3336 2230h91l8 10h-95z" />
      <path fill="#534764" d="M3427 2230h24l10 10h-26z" />
      <path fill="#47200f" d="M3520 2185h64v50h-64z" />
      <path fill="#7c7c7c" d="M55 2132h3475v12H55z" />
      <path fill="#b3b3b3" d="M0 2132h58v58H22q-22 0-22-22z" />
      <path fill="#8e8e8e" d="M3525 2132h59v58h-59z" />
      <path fill="#1b1c22" d="M56 2132h108v14H56z" />
      <path fill="#52318a" d="M83 2132h27v14H83z" />
      <path fill="#2d6489" d="M110 2132h28v14h-28z" />
    </svg>
  );
}

export default function App() {
  return (
    <div className="relative flex h-[2240px] w-[3584px] flex-col overflow-hidden bg-[#426fae]">
      <Wallpaper />
      <div className="absolute top-[2132px] left-[190px] flex h-[8px] w-[220px] items-end overflow-hidden text-[25px] leading-none font-bold text-[#3c3c3c] font-['Inter',sans-serif]">
        <span className="-mb-[2px]">collaborative mm</span>
      </div>
      <MenuBar />
      <div className="relative flex h-[2083px] flex-col overflow-hidden rounded-t-[18px] rounded-b-[18px] bg-white shadow-[0_0_0_1px_rgba(0,0,0,0.5)]">
        <TabStrip />
        <Toolbar />
        <div className="flex h-[1894px]">
          <div className="relative isolate h-[1894px] w-[3554px] overflow-hidden border-l-2 border-[#1c1c1c] bg-black">
            <div className="mt-[50px] ml-[88px] flex h-[73px] w-[300px] items-center bg-white pl-[16px] text-[30px] leading-none text-black font-['Noto_Sans',sans-serif]">
              Menu
            </div>
            <div className="mt-[1036px] ml-[82px] flex">
              <div>
                <Toggle label="Nur E-Mail/Word" on={false} />
                <Toggle label="Nur WhatsApp" on />
                <Toggle label="Nur Chalid" on={false} />
                <Toggle label="Nur Sonja" on />
              </div>
              <div>
                <Toggle label="subjectivity" on />
                <Toggle label="polarity" on />
                <Toggle label="confidence" on />
              </div>
            </div>
            {LINES.map((line, i) => (
              <div key={i} className="absolute top-0 -left-[2px] mix-blend-lighten">
                <PoemLine line={line} />
              </div>
            ))}
            <svg className="absolute top-[1740px] left-[2948px] h-[160px] w-[604px]" viewBox="2950 1948 604 160">
              <path d="M3440 1971l30 1 84 6v5z" fill="#74d48c" />
              <path d="M2966 2095l60 1 140 6h-110z" fill="#65c492" />
            </svg>
          </div>
          <div className="w-[30px] border-l border-[#e8e8e8] bg-[#fafafa] pt-[181px] pl-[8px]">
            <div className="h-[359px] w-[15px] rounded-full bg-[#c1c1c1]" />
          </div>
        </div>
        <div className="h-[30px] border-t-2 border-[#e0e0e0] bg-[#ebebeb] pt-[6px] pl-[6px]">
          <div className="h-[16px] w-[2925px] rounded-full bg-[#b4b4b4]" />
        </div>
      </div>
      <Dock />
    </div>
  );
}
